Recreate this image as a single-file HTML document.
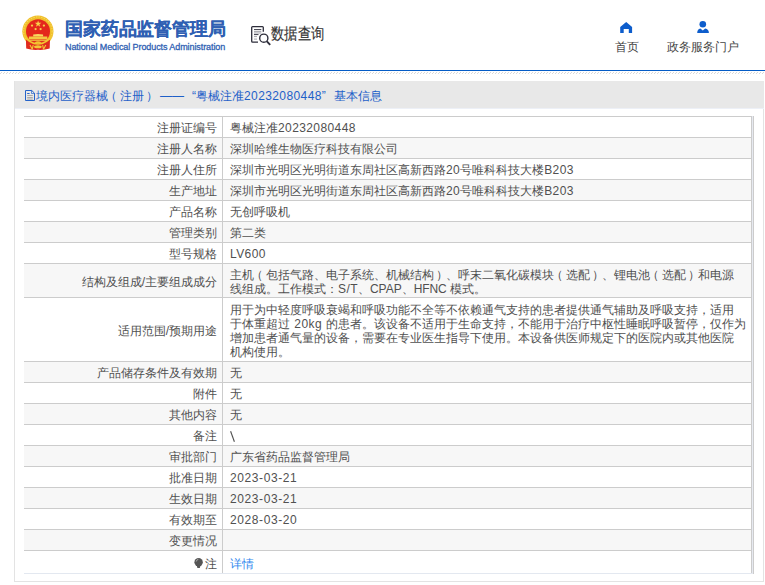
<!DOCTYPE html>
<html><head><meta charset="utf-8">
<style>
*{margin:0;padding:0;box-sizing:border-box}
html,body{width:765px;height:585px;overflow:hidden;background:#fff;font-family:"Liberation Sans",sans-serif;color:#333}
.abs{position:absolute}
.emb{left:18px;top:12px;width:40px;height:42px}
.t1{left:65px;top:17px;font-size:17.7px;font-weight:bold;-webkit-text-stroke:.15px #2f5fb3;color:#2f5fb3;line-height:24px;white-space:nowrap;letter-spacing:-0.15px}
.t2{left:65px;top:41.5px;font-size:9.6px;color:#2f5fb3;-webkit-text-stroke:.3px #2f5fb3;line-height:10px;white-space:nowrap;letter-spacing:-0.1px;transform:scaleX(.94);transform-origin:0 0}
.sq{left:250px;top:25px;width:22px;height:22px}
.sqt{left:271px;top:24px;font-size:16px;color:#333;-webkit-text-stroke:.15px #333;line-height:20px;white-space:nowrap;transform:scaleX(.835);transform-origin:0 0}
.nav{font-size:12px;color:#444;line-height:14px;white-space:nowrap}
.blue{left:0;top:70px;width:765px;height:1px;background:#045cc6}
.hatch{left:0;top:72px;width:765px;height:2px;background:repeating-linear-gradient(45deg,#d8d8d8 0 1px,#fff 1px 3px)}
.panel{left:14px;top:81px;width:750px;height:501px;border:1px solid #e3e3e3;border-top:none;background:#fff}
.ph{left:0;top:0;width:749px;height:27px;background:#e8e8e8}
.pt{left:10px;top:7px;font-size:12px;color:#1e60c8;line-height:16px;white-space:nowrap}
.fw{display:inline-block;width:12px}
table{position:absolute;left:9px;top:35px;width:728px;border-collapse:collapse;table-layout:fixed}
td{border-top:1px solid #ccc;border-bottom:1px solid #ccc;font-size:12px;color:#505050;line-height:14px;padding:2px 6px 0 7px;vertical-align:middle;height:21px;white-space:nowrap}
td.l{width:198.5px;text-align:right;padding-right:5px;border-right:1px solid #ccc}
td.v{border-right:1px solid #ccc}
tr:nth-child(even) td{background:#f7f7f7}
.n{letter-spacing:.4px}
i{font-style:normal;position:relative}.pl{left:-3px}.pr{left:2px}
a{color:#2f88ee;text-decoration:none}
.rb{left:766px;top:0}
</style></head><body>
<svg class="abs emb" viewBox="0 0 40 42">
  <circle cx="19.9" cy="19.2" r="15.6" fill="#f0bf2a"/>
  <circle cx="19.9" cy="19.2" r="14.3" fill="none" stroke="#f8d75a" stroke-width="1.1" stroke-dasharray="1.4 1.2"/>
  <circle cx="20" cy="19.3" r="12" fill="#e4281c"/>
  <path d="M7.9 27.5Q20 31 32 27.5L31.7 36.6Q26 38.2 20 37.8Q14 38.2 8.2 36.6Z" fill="#e02a1e"/>
  <path d="M6.3 23.5Q11 31.5 20 32Q29 31.5 33.6 23.5" fill="none" stroke="#f2c530" stroke-width="1.6"/>
  <path d="M16.5 30.5Q20 28 23.5 30.5Q20 32.5 16.5 30.5z" fill="#f2c530"/>
  <ellipse cx="19.9" cy="34.8" rx="3.8" ry="1.5" fill="#f3c838"/>
  <path d="M12 33l2.4 4.4M15.2 33.2l-1 4.2M27.8 33l-2.4 4.4M24.6 33.2l1 4.2" stroke="#f3c838" stroke-width="1.1"/>
  <path d="M20.1 8.4l.8 2.4h2.5l-2 1.45.77 2.4-2.07-1.5-2.07 1.5.77-2.4-2-1.45h2.5z" fill="#f8d44a"/>
  <circle cx="14" cy="13.6" r="1.15" fill="#f6cf48"/>
  <circle cx="25.9" cy="13.6" r="1.15" fill="#f6cf48"/>
  <circle cx="17.6" cy="17.1" r="1.15" fill="#f6cf48"/>
  <circle cx="22.6" cy="17.1" r="1.15" fill="#f6cf48"/>
  <path d="M15.2 22.6Q20 21.4 25.1 22.6V24.5H15.2z" fill="#f8d760"/>
  <path d="M10.9 24.5h18.4v3H10.9z" fill="#f3c843"/>
  <path d="M11.5 28.5h17" stroke="#f3c843" stroke-width=".8"/>
</svg>
<div class="abs t1">国家药品监督管理局</div>
<div class="abs t2">National Medical Products Administration</div>
<svg class="abs" style="left:248px;top:22px" width="26" height="26" viewBox="248 22 26 26"><path d="M258 42.1H252.6Q251.7 42.1 251.7 41.2V27.5Q251.7 26.6 252.6 26.6H262.4Q263.3 26.6 263.3 27.5V31.8" fill="none" stroke="#2d2d3a" stroke-width="1.3"/><path d="M254 29.6h7.3" stroke="#3a3a46" stroke-width="1"/><path d="M254 31.6h7.3M254 33h7.3" stroke="#9a9aa2" stroke-width=".9"/><path d="M254 34.6h4.5" stroke="#3a3a46" stroke-width="1"/><path d="M254 36.6h3M254 39.1h3" stroke="#9a9aa2" stroke-width=".9"/><circle cx="263.8" cy="38.2" r="4.1" fill="none" stroke="#2d2d3a" stroke-width="1.4"/><path d="M266.9 41.3L270.2 44.8" stroke="#2d2d3a" stroke-width="1.9"/></svg>
<div class="abs sqt">数据查询</div>
<svg class="abs" style="left:619px;top:21px" width="15" height="13" viewBox="0 0 15 13"><path d="M7.2 1L1.2 6V12H4.7V8H9.8V12H13.1V6z" fill="#0d5dcc"/></svg>
<div class="abs nav" style="left:615px;top:40px">首页</div>
<svg class="abs" style="left:696px;top:20px" width="14" height="14" viewBox="0 0 14 14"><circle cx="6.8" cy="4.3" r="3.3" fill="#0d5dcc"/><path d="M1.2 13.1Q1.2 8.9 4.4 8.4L6.8 10.6L9.2 8.4Q12.9 8.9 12.9 13.1z" fill="#0d5dcc"/></svg>
<div class="abs nav" style="left:667px;top:40px">政务服务门户</div>
<svg class="abs" style="left:25px;top:89px;z-index:2" width="11" height="13" viewBox="25 89 11 13"><path d="M25.5 90.5H31.8L34.5 93.2V100.5H25.5Z" fill="none" stroke="#2563c9" stroke-width="1"/><path d="M31.5 90.5V93.5H34.5" fill="none" stroke="#2563c9" stroke-width=".7"/><path d="M27.2 93.5H29.6" stroke="#2563c9" stroke-width="1"/><path d="M27.2 95.5H32.8M27.2 97.5H32.8M27.2 99H32.8" stroke="#9a9a9a" stroke-width=".8"/></svg>
<div class="abs blue"></div>
<svg class="abs" style="left:0;top:72px" width="765" height="2"><defs><pattern id="hp" width="3" height="2" patternUnits="userSpaceOnUse"><rect x="1" y="0" width="1" height="1" fill="#d9d9d9"/><rect x="0" y="1" width="1" height="1" fill="#d9d9d9"/></pattern></defs><rect width="765" height="2" fill="url(#hp)"/></svg>
<div class="abs panel">
  <div class="abs" style="left:0;top:27px;width:749px;height:1px;background:#edf0f7"></div><div class="abs ph"><div class="abs pt"><span style="display:inline-block;width:11px"></span>境内医疗器械<i class="pl">（</i>注册<i class="pr">）</i><span style="margin-left:4px">—</span>—<span class="fw" style="text-align:right">“</span>粤械注准<span class="n">20232080448</span><span class="fw">”</span>基本信息</div></div>
  <table>
    <tr><td class="l">注册证编号</td><td class="v">粤械注准<span class="n">20232080448</span></td></tr>
    <tr><td class="l">注册人名称</td><td class="v">深圳哈维生物医疗科技有限公司</td></tr>
    <tr><td class="l">注册人住所</td><td class="v">深圳市光明区光明街道东周社区高新西路<span class="n">20</span>号唯科科技大楼<span class="n">B203</span></td></tr>
    <tr><td class="l">生产地址</td><td class="v">深圳市光明区光明街道东周社区高新西路<span class="n">20</span>号唯科科技大楼<span class="n">B203</span></td></tr>
    <tr><td class="l">产品名称</td><td class="v">无创呼吸机</td></tr>
    <tr><td class="l">管理类别</td><td class="v">第二类</td></tr>
    <tr><td class="l">型号规格</td><td class="v"><span class="n">LV600</span></td></tr>
    <tr><td class="l" style="height:34px">结构及组成/主要组成成分</td><td class="v">主机<i class="pl">（</i>包括气路、电子系统、机械结构<i class="pr">）</i>、呼末二氧化碳模块<i class="pl">（</i>选配<i class="pr">）</i>、锂电池<i class="pl">（</i>选配<i class="pr">）</i>和电源<br>线组成。工作模式：<span class="n">S/T</span>、<span>CPAP</span>、<span style="letter-spacing:-.1px">HFNC </span>模式。</td></tr>
    <tr><td class="l" style="height:64px">适用范围/预期用途</td><td class="v">用于为中轻度呼吸衰竭和呼吸功能不全等不依赖通气支持的患者提供通气辅助及呼吸支持，适用<br>于体重超过<span class="n" style="word-spacing:.6px"> 20kg </span>的患者。该设备不适用于生命支持，不能用于治疗中枢性睡眠呼吸暂停，仅作为<br>增加患者通气量的设备，需要在专业医生指导下使用。本设备供医师规定下的医院内或其他医院<br>机构使用。</td></tr>
    <tr><td class="l">产品储存条件及有效期</td><td class="v">无</td></tr>
    <tr><td class="l">附件</td><td class="v">无</td></tr>
    <tr><td class="l">其他内容</td><td class="v">无</td></tr>
    <tr><td class="l">备注</td><td class="v"><svg width="7" height="12" viewBox="0 0 7 12" style="vertical-align:-3px"><path d="M.6 .2L4.4 10.7" stroke="#505050" stroke-width="1.1"/></svg></td></tr>
    <tr><td class="l">审批部门</td><td class="v">广东省药品监督管理局</td></tr>
    <tr><td class="l">批准日期</td><td class="v"><span class="n" style="letter-spacing:.6px">2023-03-21</span></td></tr>
    <tr><td class="l">生效日期</td><td class="v"><span class="n" style="letter-spacing:.6px">2023-03-21</span></td></tr>
    <tr><td class="l">有效期至</td><td class="v"><span class="n" style="letter-spacing:.6px">2028-03-20</span></td></tr>
    <tr><td class="l">变更情况</td><td class="v"></td></tr>
    <tr><td class="l" style="height:23px;padding-top:3px;border-bottom-color:#e3e8f0"><svg width="10" height="11" viewBox="0 0 10 11" style="vertical-align:-1px;margin-right:1px"><circle cx="4.6" cy="4.3" r="4.2" fill="#555"/><path d="M2.8 7.5h3.6l-.6 2.6H3.4z" fill="#555"/><path d="M2.2 3.6Q2.6 1.6 4.4 1.2" stroke="#bbb" stroke-width=".8" fill="none"/></svg>注</td><td class="v" style="padding-top:3px;border-bottom-color:#e3e8f0"><a>详情</a></td></tr>
  </table>
  <div class="abs" style="left:737px;top:35px;width:2px;height:458px;border-right:1px solid #ccc;background:#e6e9f0;width:2px"></div>
</div>
</body></html>
